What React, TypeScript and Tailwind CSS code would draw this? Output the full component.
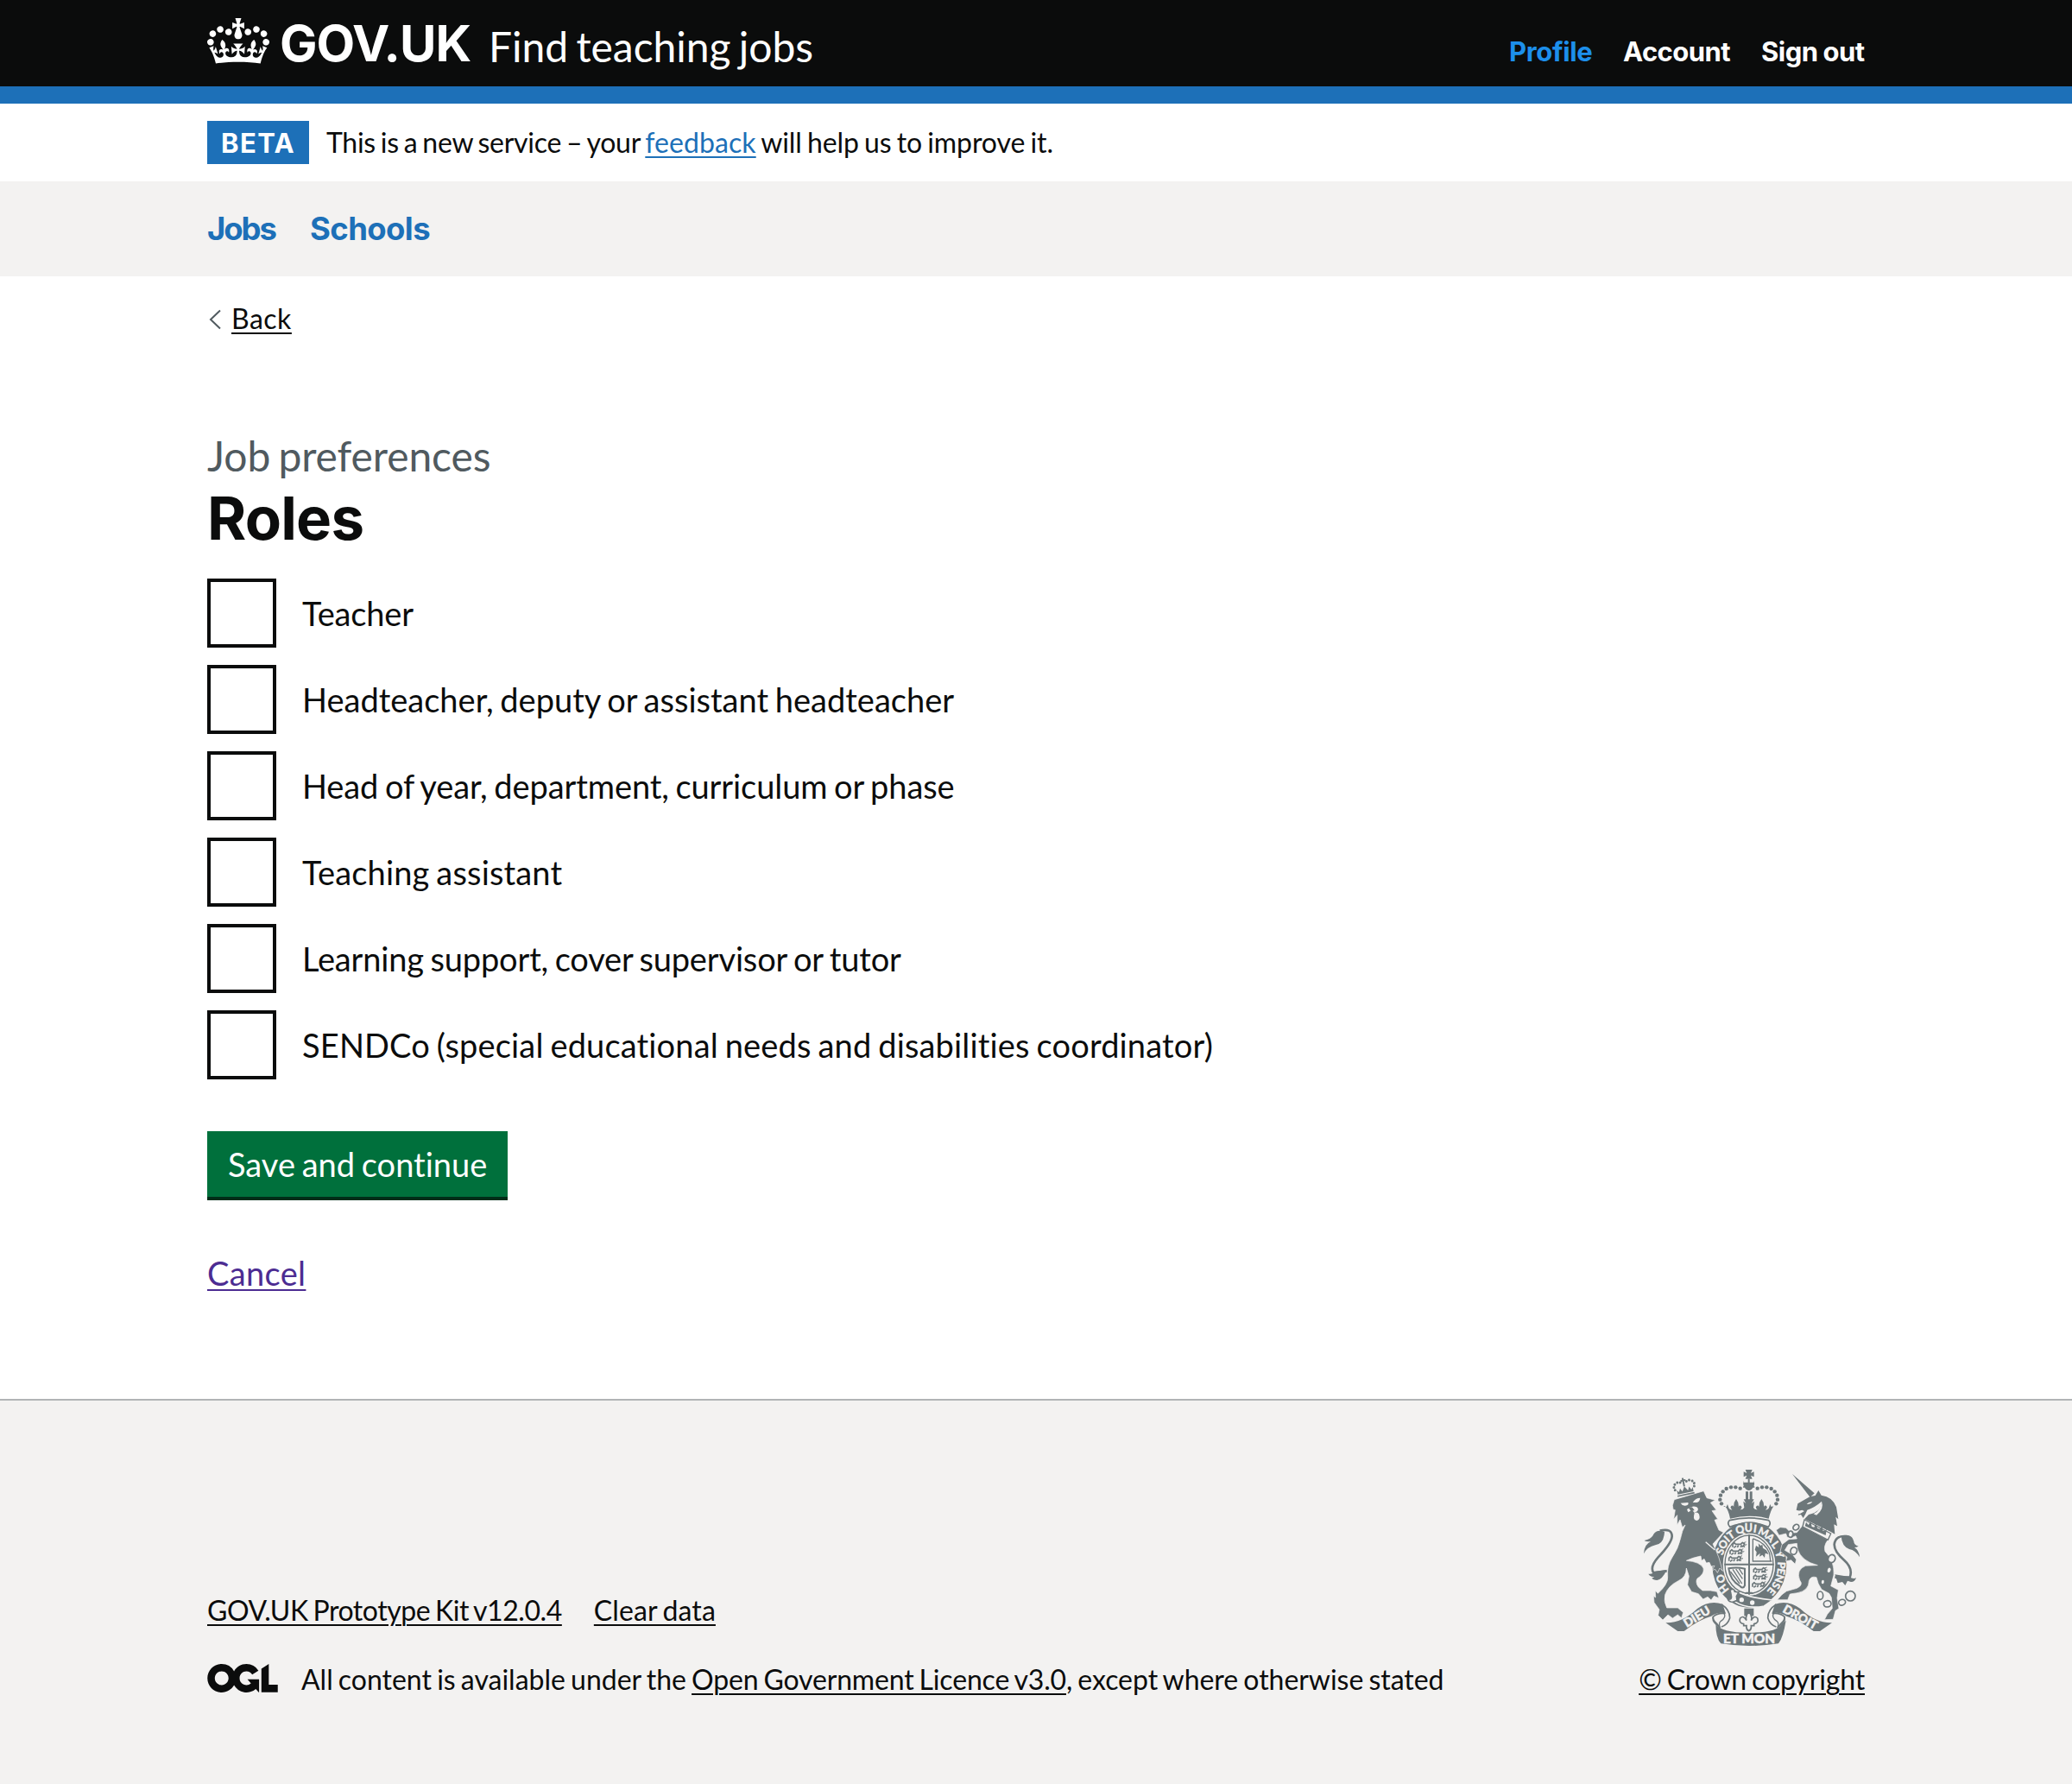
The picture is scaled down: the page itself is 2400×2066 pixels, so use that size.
import type { ReactNode } from 'react';

const ROLES = [
  { id: 'teacher', label: 'Teacher', tracking: 'tracking-[-0.15px]' },
  { id: 'headteacher', label: 'Headteacher, deputy or assistant headteacher', tracking: 'tracking-[0.01px]' },
  { id: 'head-of-year', label: 'Head of year, department, curriculum or phase', tracking: 'tracking-[-0.09px]' },
  { id: 'teaching-assistant', label: 'Teaching assistant', tracking: 'tracking-[0.16px]' },
  { id: 'learning-support', label: 'Learning support, cover supervisor or tutor', tracking: 'tracking-[-0.16px]' },
  { id: 'sendco', label: 'SENDCo (special educational needs and disabilities coordinator)', tracking: 'tracking-[0.16px]' },
];

function Crown() {
  return (
    <svg className="h-[53px] w-[72px] shrink-0" viewBox="0 0 132 97" fill="currentColor" aria-hidden="true">
      <path d="M25 30.2c3.5 1.5 7.7-.2 9.1-3.7 1.5-3.6-.2-7.8-3.9-9.2-3.6-1.4-7.6.3-9.1 3.9-1.4 3.5.3 7.5 3.9 9zM9 39.5c3.6 1.5 7.8-.2 9.2-3.7 1.5-3.6-.2-7.8-3.9-9.1-3.6-1.5-7.6.2-9.1 3.8-1.4 3.5.3 7.5 3.8 9zM4.4 57.2c3.5 1.5 7.7-.2 9.1-3.8 1.5-3.6-.2-7.7-3.9-9.1-3.5-1.5-7.6.3-9.1 3.8-1.4 3.5.3 7.6 3.9 9.1zm38.3-21.4c3.5 1.5 7.7-.2 9.1-3.8 1.5-3.6-.2-7.7-3.9-9.1-3.6-1.5-7.6.3-9.1 3.8-1.3 3.6.4 7.7 3.9 9.1zm64.4-5.6c-3.6 1.5-7.8-.2-9.1-3.7-1.5-3.6.2-7.8 3.8-9.2 3.6-1.4 7.7.3 9.2 3.9 1.3 3.5-.4 7.5-3.9 9zm15.9 9.3c-3.6 1.5-7.7-.2-9.1-3.7-1.5-3.6.2-7.8 3.7-9.1 3.6-1.5 7.7.2 9.2 3.8 1.5 3.5-.3 7.5-3.8 9zm4.7 17.7c-3.6 1.5-7.8-.2-9.2-3.8-1.5-3.6.2-7.7 3.9-9.1 3.6-1.5 7.7.3 9.2 3.8 1.3 3.5-.4 7.6-3.9 9.1zM89.3 35.8c-3.6 1.5-7.8-.2-9.2-3.8-1.4-3.6.2-7.7 3.9-9.1 3.6-1.5 7.7.3 9.2 3.8 1.4 3.6-.3 7.7-3.9 9.1zM69.7 17.7l8.9 4.7V9.3l-8.9 2.8c-.2-.3-.5-.6-.9-.9L72.4 0H59.6l3.5 11.2c-.3.3-.6.5-.9.9l-8.8-2.8v13.1l8.8-4.7c.3.3.6.7.9.9l-5 15.4v.1c-.2.8-.4 1.6-.4 2.4 0 4.1 3.1 7.5 7 8.1h.2c.3 0 .7.1 1 .1.4 0 .7 0 1-.1h.2c4-.6 7.1-4.1 7.1-8.1 0-.8-.1-1.7-.4-2.4V34l-5.1-15.4c.4-.2.7-.6 1-.9zM66 92.8c16.9 0 32.8 1.1 47.1 3.2 4-16.9 8.9-26.7 14-33.5l-9.6-3.4c1 4.9 1.1 7.2 0 10.2-1.5-1.4-3-4.3-4.2-8.7L108.6 76c2.8-2 5-3.2 7.5-3.3-4.4 9.4-10 11.9-13.6 11.2-4.3-.8-6.3-4.6-5.6-7.9 1-4.7 5.7-5.9 8-.5 4.3-8.7-3-11.4-7.6-8.8 7.1-7.2 7.9-13.5 2.1-21.1-8 6.1-8.1 12.3-4.5 20.8-4.7-5.4-12.1-2.5-9.5 6.2 3.4-5.2 7.9-2 7.2 3.1-.6 4.3-6.4 7.8-13.5 7.2-10.3-.9-10.9-8-11.2-13.8 2.5-.5 7.1 1.8 11 7.3L80.2 60c-4.1 4.4-8 5.3-12.3 5.4 1.4-4.4 8-11.6 8-11.6H55.5s6.4 7.2 7.9 11.6c-4.2-.1-8-1-12.3-5.4l1.4 16.4c3.9-5.5 8.5-7.7 10.9-7.3-.3 5.8-.9 12.8-11.1 13.8-7.2.6-12.9-2.9-13.5-7.2-.7-5 3.8-8.3 7.1-3.1 2.7-8.7-4.6-11.6-9.4-6.2 3.7-8.5 3.6-14.7-4.6-20.8-5.8 7.6-5 13.9 2.2 21.1-4.7-2.6-11.9.1-7.7 8.8 2.3-5.5 7.1-4.2 8.1.5.7 3.3-1.3 7.1-5.7 7.9-3.5.7-9-1.8-13.5-11.2 2.5.1 4.7 1.3 7.5 3.3l-4.7-15.4c-1.2 4.4-2.7 7.2-4.3 8.7-1.1-3-.9-5.3 0-10.2l-9.5 3.4c5 6.9 9.9 16.7 14 33.5 14.8-2.1 30.8-3.2 47.7-3.2z" />
    </svg>
  );
}

function OglLogo() {
  return (
    <svg className="h-[33px] w-[82px] shrink-0" viewBox="0 0 483.2 195.7" fill="currentColor" aria-label="Open Government Licence">
      <path d="M421.5 142.8V.1l-50.7 32.3v161.1h112.4v-50.7zm-122.3-9.6A47.12 47.12 0 0 1 221 97.8c0-26 21.1-47.1 47.1-47.1 16.7 0 31.4 8.7 39.7 21.8l42.7-27.2A97.63 97.63 0 0 0 268.1 0c-36.5 0-68.3 20.1-85.1 49.7A98 98 0 0 0 97.8 0C43.9 0 0 43.9 0 97.8s43.9 97.8 97.8 97.8c36.5 0 68.3-20.1 85.1-49.7a97.76 97.76 0 0 0 149.6 25.4l19.4 22.2h3v-87.8h-80l24.3 27.5zM97.8 145c-26 0-47.1-21.1-47.1-47.1s21.1-47.1 47.1-47.1 47.1 21.1 47.1 47.1S123.8 145 97.8 145" />
    </svg>
  );
}

const ARCH_PEARLS: [number, number][] = [
  [407, 131], [391, 127], [375, 127], [359, 132], [347, 142], [339, 155], [337, 170], [342, 184],
];

const GARTER_LETTERS: [string, number, number, number][] = [
  ['H', 350, 480, -128], ['O', 339, 445, -112],
  ['S', 337, 350, -66], ['O', 348, 325, -54], ['I', 361, 306, -44], ['T', 375, 293, -34],
  ['Q', 406, 274, -14], ['U', 436, 269, 0], ['I', 459, 271, 8],
  ['M', 488, 283, 24], ['A', 512, 302, 42], ['L', 530, 326, 54], ['Y', 544, 360, 74],
  ['P', 550, 398, 92], ['E', 549, 420, 99], ['N', 543, 444, 108], ['S', 532, 468, 118], ['E', 516, 488, 130],
];

const CHAIN_LINKS: [number, number, number, number, number][] = [
  [601, 266, 11, 9, -35], [582, 290, 8, 11, 10], [593, 348, 11, 13, 20], [725, 375, 12, 14, 20], [716, 415, 8, 11, 20],
  [694, 456, 7, 9, 10], [685, 503, 10, 14, 0], [710, 532, 13, 11, -10], [761, 527, 12, 10, -20],
];

function Passant({ x, y }: { x: number; y: number }) {
  return (
    <g transform={`translate(${x} ${y})`} fill="none" stroke="currentColor" strokeWidth="5" strokeLinejoin="round">
      <path d="M2 16V6l6-5 4 5h18l6-6 7 5-4 7 5 4M6 18l8-6M18 17l4-7M30 17l2-6 7 4" />
      <path d="M40 1l8-3M44 9l7-2" strokeWidth="3" />
    </g>
  );
}

function RibbonEnd() {
  return (
    <>
      <path d="M148 598Q204 600 258 549 300 517 346 533L357 566Q332 558 306 575 260 588 212 627L190 627Z" />
      <path d="M342 534Q371 552 371 581 364 604 342 612" fill="none" stroke="currentColor" strokeWidth="5" />
      <path d="M355 566Q330 562 313 577C311 596 328 596 334 612" fill="none" stroke="currentColor" strokeWidth="5" />
      <path d="M352 566Q358 580 340 592 330 600 338 616L322 602Q308 590 313 576" fill="none" stroke="currentColor" strokeWidth="4" />
    </>
  );
}

function RoyalArms() {
  return (
    <svg className="h-[204px] w-[250px] text-[#6d777a]" viewBox="72 66 750 612" fill="currentColor" aria-label="Royal coat of arms">
      {/* imperial crown */}
      <path d="M425 66h24l-5 12 11-5v18l-11-5 5 12h-24l5-12-11 5V73l11 5z" />
      <path d="M434 98h6v12h14v-6q4 8 1 18-8 16-18 16t-18-16q-3-10 1-18v6h14zM417 124h40v4h-40z" />
      {ARCH_PEARLS.map(([x, y]) => (
        <g key={`${x}-${y}`}>
          <circle cx={x} cy={y} r="6.6" />
          <circle cx={874 - x} cy={y} r="6.6" />
        </g>
      ))}
      <path d="M426 142h9v31h-9zM440 142h9v31h-9z" />
      <path d="M347 193l12 2 4-9 5 14q5 6 11 5-9-6-3-13 5-4 9 3-2-14 8-27 10 13 8 27 4-7 9-3 6 7-3 13 9 1 14-7l-3-22 9 7-8-14h36l-8 14 9-7-3 22q5 8 14 7-9-6-3-13 5-4 9 3-2-14 8-27 10 13 8 27 4-7 9-3 6 7-3 13 6 1 11-5l5-14 4 9 8-2q-10 14-17 43-65-18-134 0-5-29-18-44z" />
      <path d="M370 242q67-17 136 0 10 10-1 23-66-27-134 0-11-13-1-23z" fill="#f3f2f1" stroke="currentColor" strokeWidth="5" />

      {/* garter and shield */}
      <ellipse cx="439" cy="396" rx="129" ry="149" />
      <ellipse cx="438" cy="395" rx="91" ry="108" fill="#f3f2f1" />
      <ellipse cx="438" cy="395" rx="84" ry="101" fill="none" stroke="currentColor" strokeWidth="4" />
      <path d="M435 292h6v208h-6zM352 392h172v6H352z" />
      <Passant x={379} y={319} />
      <Passant x={370} y={343} />
      <Passant x={366} y={367} />
      <Passant x={452} y={407} />
      <Passant x={452} y={431} />
      <Passant x={448} y={457} />
      <path d="M451 306v78h66M451 306q40 10 58 50l3 26" fill="none" stroke="currentColor" strokeWidth="4" />
      <path d="M462 330l10 6-2-14 8 8 6-4 2 12 12 8 8 14-12-4-2 16-8-10-10 6 2-12-14 12 2-16-6-8z" />
      <path d="M367 409q28-6 56 1v58q-6 14-16 3-36-22-40-62z" fill="none" stroke="currentColor" strokeWidth="6" />
      <path d="M381 412l32 50M392 411l23 34M403 410l13 20M373 420l32 42" stroke="currentColor" strokeWidth="4" />
      {GARTER_LETTERS.map(([c, x, y, r], i) => (
        <text
          key={i}
          transform={`translate(${x} ${y}) rotate(${r})`}
          y="13"
          textAnchor="middle"
          fill="#f3f2f1"
          stroke="#f3f2f1"
          strokeWidth="1.4"
          className="font-['Lato'] text-[37px] font-bold"
        >
          {c}
        </text>
      ))}
      {/* buckle and belt end */}
      <path d="M396 489Q440 512 520 519L490 540Q430 552 388 524z" stroke="#f3f2f1" strokeWidth="5" />
      <circle cx="412" cy="518" r="8" fill="#f3f2f1" />
      <circle cx="449" cy="528" r="8" fill="#f3f2f1" />
      <path d="M372 484q14-8 16 6l14 2-8 14 2 14-14 6q-14 0-18-10 16 2 12-12z" fill="#f3f2f1" stroke="currentColor" strokeWidth="5" />
      <path d="M428 491h20l6 6h-32z" />

      {/* lion */}
      <path
        d="M172 190L178 170 280 140 291 164 320 172 304 181 324 206 309 209 329 238 318 241 333 276 349 284 312 324Q323 345 333 372L346 418 336 408 328 424 320 412 309 416 318 400 306 402 300 388 289 390 282 376 273 382 270 366Q240 372 220 382 268 386 279 408 284 428 258 444 250 456 262 474L276 486 304 486 326 490 333 512 316 505 306 519 294 508 278 516 262 497 238 490 224 466 229 436 220 408Q220 440 192 452 156 470 146 500 140 522 152 546L190 546 209 562 203 581 190 570 172 582 156 570 138 588 122 572 126 552 108 527 106 505 113 510 112 486 121 496Q158 462 155 438 152 400 170 372 192 340 200 304 204 280 216 258L206 266 198 240 188 258 188 224 176 238 181 206 174 204z"
        stroke="#f3f2f1"
        strokeWidth="2"
      />
      <path d="M287 317l32 28" stroke="#f3f2f1" strokeWidth="4" />
      <path d="M200 182l26-2q4 10-10 11-10 1-16-9zM242 180q10-16 26-16-2 14-12 16zM222 204q18-16 34-8 8 6 2 14l-10 6-8-10-14 8z" fill="#f3f2f1" />
      <path d="M248 216q12-6 17 8 4 14-8 19-13-2-11-16z" fill="#f3f2f1" />
      <path d="M228 199q10-6 14 0l6 8-12 4z" />
      <g transform="rotate(-12 214 130)">
        <path d="M184 150h60v5h-60zM186 142h56v5h-56zM186 132l6 8 6-12 6 12 10-16 10 16 6-12 6 12 6-8v12h-56z" />
        {[[180, 130], [178, 120], [183, 111], [193, 106], [203, 108], [248, 130], [250, 120], [245, 111], [235, 106], [225, 108]].map(([x, y]) => (
          <circle key={`${x}-${y}`} cx={x} cy={y} r="4.4" />
        ))}
        <path d="M211 94h6v6h6v6h-6v18h-6v-18h-6v-6h6z" />
      </g>
      <path d="M128 278Q170 268 170 298 168 322 122 370 92 404 106 424L152 418" fill="none" stroke="currentColor" strokeWidth="8" />
      <path d="M72 358Q73 326 96 316 76 316 74 312 100 306 106 290 118 272 144 282 142 324 112 328 84 334 72 358zM88 428q16 2 20-8l44-6q-16 34-34 36-14 0-18-8 6 0 8-4-14 0-20-10z" />

      {/* unicorn */}
      <path d="M588 81L665 148 650 162z" />
      <path d="M649 160L668 156 679 138 689 155Q728 160 741 196L748 238 739 230 744 262 733 256 736 290 722 282 630 238 645 222Q690 212 690 176 668 196 640 206L634 220 626 234 618 222 608 224 616 210 602 206 607 184z" />
      <path d="M638 186q8-10 20-8-6 10-20 8zM600 212l22-6 8 4-16 10z" fill="#f3f2f1" />
      <path d="M662 220q26-14 28-44 10 26-18 48z" fill="#f3f2f1" />
      <path
        d="M622 262L712 310Q696 330 702 350 736 384 732 432L722 470 748 484 744 512 750 548 738 556 730 586 700 587 710 568 727 548 724 510 716 496 690 482Q676 462 672 440 652 434 646 452 646 486 606 494L580 498 572 518 536 518 552 500 568 488 604 478Q628 466 614 450 600 414 634 400L676 398Q620 384 606 342L604 322 574 326 562 346 590 362 602 378 598 394 584 380 566 384 570 370 546 350 552 326 576 308 604 306 600 296 582 304 570 300 566 288 542 294 532 276 546 266 566 268 584 286 604 284z"
        stroke="#f3f2f1"
        strokeWidth="2"
      />
      <path d="M630 240l92 48-10 22-88-46z" fill="#f3f2f1" stroke="currentColor" strokeWidth="4" />
      <path d="M632 262l4-14 8 10 8-12 4 18 8 2 6-14 6 18 8 2 8-12 2 18 8 0 6-8-4 24z" />
      {CHAIN_LINKS.map(([x, y, rx, ry, r]) => (
        <ellipse key={`${x}-${y}`} cx={x} cy={y} rx={rx} ry={ry} transform={`rotate(${r} ${x} ${y})`} fill="#f3f2f1" stroke="currentColor" strokeWidth="5" />
      ))}
      <circle cx="790" cy="505" r="17" fill="none" stroke="currentColor" strokeWidth="5" />
      <path d="M780 298Q738 292 734 326 734 350 768 380 800 408 788 440L736 440" fill="none" stroke="currentColor" strokeWidth="8" />
      <path d="M758 296Q796 286 802 316 802 328 818 332 810 336 804 336 820 346 822 370 808 346 786 342 760 332 758 296zM736 430l50 8q14 10 24 4-4 14-18 14l-12-4-8 16-10-12-16 4z" />

      {/* motto ribbon */}
      <RibbonEnd />
      <g transform="matrix(-1 0 0 1 874 0)">
        <RibbonEnd />
      </g>
      <path d="M322 602Q340 632 437 632 536 632 552 602L566 590Q556 650 540 670 437 686 340 670 322 650 322 602z" />
      <g fill="#f3f2f1" stroke="#f3f2f1" strokeWidth="1.4" textAnchor="middle" className="font-['Lato'] font-black [word-spacing:0px]">
        <text transform="translate(264 589) rotate(-31)" className="text-[42px]">DIEU</text>
        <text transform="translate(609 591) rotate(29)" className="text-[42px]">DROIT</text>
        <text x="438" y="669" className="text-[46px]">ET MON</text>
      </g>
      <path d="M421 548h33v26h-33z" />
      <path
        d="M437 560q14 14 8 30 10-20 22-8 6 16-12 20v6h-10q2 14-8 18-10-4-8-18h-10v-6q-18-4-12-20 12-12 22 8-6-16 8-30z"
        fill="#f3f2f1"
        stroke="currentColor"
        strokeWidth="5"
      />
    </svg>
  );
}

function Container({ className = '', children }: { className?: string; children: ReactNode }) {
  return <div className={`mx-auto w-[1920px] ${className}`}>{children}</div>;
}

const linkLine = 'underline decoration-2 underline-offset-[4px]';

export default function App() {
  return (
    <div className="min-h-[2066px] w-[2400px] bg-white font-['Lato',sans-serif] whitespace-nowrap text-[#0b0c0c] [font-variant-ligatures:none] [word-spacing:-2px]">
      <header className="h-[120px] border-b-[20px] border-[#1d70b8] bg-[#0b0c0c] text-white">
        <Container className="flex h-[100px] items-start justify-between">
          <a className="flex items-start">
            <span className="mt-[21px]">
              <Crown />
            </span>
            <span className="ml-[12px] w-[222px] font-['Inter'] text-[58px] leading-[100px] font-bold tracking-[-1px]">GOV.UK</span>
            <span className="ml-5 text-[48px] leading-[107px] tracking-[-0.02px] [word-spacing:-3px]">Find teaching jobs</span>
          </a>
          <nav className="mt-10 flex font-['Inter'] text-[31px] leading-10 font-bold">
            <a className="w-[132px] tracking-[-0.35px] text-[#1d8feb]">Profile</a>
            <a className="w-[160px] tracking-[-0.55px]">Account</a>
            <a className="w-[120px] tracking-[-0.5px] [word-spacing:-1px]">Sign out</a>
          </nav>
        </Container>
      </header>

      <Container className="flex h-[90px] items-start gap-5 pt-5">
        <strong className="h-[50px] w-[118px] bg-[#1d70b8] pl-4 font-['Inter'] text-[31px] leading-[51px] font-bold tracking-[1.4px] text-white">BETA</strong>
        <p className="flex text-[32px] leading-[49px] whitespace-pre">
          <span className="tracking-[-0.27px]">This is a new service – your </span>
          <a className={`tracking-[0.08px] text-[#1d70b8] ${linkLine}`}>feedback</a>
          <span className="tracking-[-0.07px]"> will help us to improve it.</span>
        </p>
      </Container>

      <nav className="h-[110px] bg-[#f3f2f1]">
        <Container className="flex font-['Inter'] text-[36.5px] leading-[110px] font-bold text-[#1d70b8]">
          <a className="w-[119px] tracking-[-2.1px]">Jobs</a>
          <a className="tracking-[-0.6px]">Schools</a>
        </Container>
      </nav>

      <Container className="h-[1300px] pt-7">
        <a className="flex h-[41px] items-center text-[32px] leading-[41px]">
          <svg className="mt-[3px] ml-[2px] h-6 w-[26px] text-[#505a5f]" viewBox="0 0 26 24" fill="none" stroke="currentColor" strokeWidth="2">
            <path d="M13 1.5L2 12l11 10.5" />
          </svg>
          <span className={`tracking-[0.5px] ${linkLine}`}>Back</span>
        </a>

        <main className="pt-[107px]">
          <form>
            <h1>
              <span className="block text-[48px] leading-[63px] tracking-[-0.1px] text-[#505a5f] [word-spacing:-3px]">Job preferences</span>
              <span className="block font-['Inter'] text-[69px] leading-[83px] font-bold tracking-[-0.8px]">Roles</span>
            </h1>
            <div className="mt-[28px] flex flex-col gap-5">
              {ROLES.map((role) => (
                <label key={role.id} className="flex h-20 items-start gap-[30px]">
                  <input type="checkbox" name="roles" value={role.id} className="size-20 shrink-0 appearance-none border-4 border-[#0b0c0c] bg-white" />
                  <span className={`text-[38px] leading-[80px] ${role.tracking}`}>{role.label}</span>
                </label>
              ))}
            </div>
            <button type="button" className="mt-[60px] block h-20 w-[348px] border-b-4 border-[#002d18] bg-[#00703c] pl-6 text-left text-[38px] leading-[74px] text-white [word-spacing:-2px]">
              Save and continue
            </button>
          </form>
          <p className="mt-[60px] text-[38px] leading-[48px]">
            <a className="tracking-[0.35px] text-[#4c2c92] underline decoration-2 underline-offset-[4px]">Cancel</a>
          </p>
        </main>
      </Container>

      <footer className="h-[446px] border-t-2 border-[#b1b4b6] bg-[#f3f2f1]">
        <Container className="flex items-end justify-between pt-20 text-[32px] leading-10">
          <div>
            <div className="flex gap-[37px]">
              <a className={`tracking-[-0.44px] ${linkLine}`}>GOV.UK Prototype Kit v12.0.4</a>
              <a className={`tracking-[0.12px] ${linkLine}`}>Clear data</a>
            </div>
            <div className="mt-10 flex items-start gap-[27px]">
              <span className="mt-[2px]">
                <OglLogo />
              </span>
              <p className="flex whitespace-pre">
                <span className="tracking-[-0.01px]">All content is available under the </span>
                <a className={`tracking-[-0.16px] ${linkLine}`}>Open Government Licence v3.0</a>
                <span className="tracking-[-0.04px]">, except where otherwise stated</span>
              </p>
            </div>
          </div>
          <div className="flex flex-col items-end">
            <span className="mr-[6px]">
              <RoyalArms />
            </span>
            <a className={`mt-[19px] tracking-[-0.15px] ${linkLine}`}>© Crown copyright</a>
          </div>
        </Container>
      </footer>
    </div>
  );
}
